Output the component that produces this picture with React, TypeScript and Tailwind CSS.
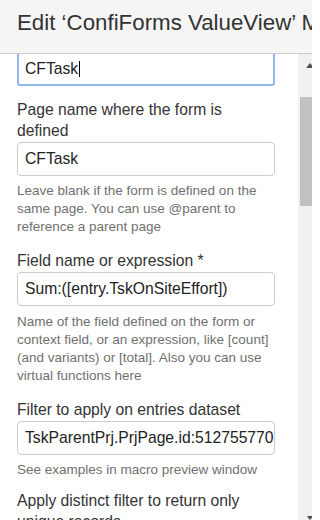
import React from "react";

function Field({ value, focused, caret }: { value: string; focused?: boolean; caret?: boolean }) {
  return (
    <div
      className={
        focused
          ? "h-[34px] w-[258px] rounded-[3px] border-2 border-[#93b7ef] pl-[6px] pr-[1px] flex items-center overflow-hidden whitespace-nowrap text-[15.7px] text-[#222]"
          : "h-[34px] w-[258px] rounded-[4px] border border-[#cccccc] pl-[7px] pr-[1px] flex items-center overflow-hidden whitespace-nowrap text-[15.7px] text-[#222]"
      }
    >
      <span className="leading-[18px]">{value}</span>
      {caret && <span className="inline-block w-[1px] h-[16px] bg-black ml-[1px]" />}
    </div>
  );
}

export default function App() {
  return (
    <div className="w-[312px] h-[520px] overflow-hidden bg-white flex flex-col font-['Liberation_Sans',Arial,sans-serif]">
      <div className="h-[54px] shrink-0 bg-[#f5f5f5] border-b border-[#cccccc] pl-[17px] pt-[11px] whitespace-nowrap overflow-hidden text-[22.3px] leading-[24px] text-[#333]">
        Edit ‘ConfiForms ValueView’ Macro
      </div>
      <div className="flex-1 flex overflow-hidden">
        <div className="w-[298px] shrink-0 overflow-hidden">
          <div className="ml-[17px] w-[258px] -mt-[2px] flex flex-col">
            <Field value="CFTask" focused caret />

            <div className="mt-[13px] text-[15.7px] leading-[21px] text-[#333]">
              Page name where the form is defined
            </div>
            <div className="mt-[1px]">
              <Field value="CFTask" />
            </div>
            <div className="mt-[6px] text-[13.5px] leading-[18px] text-[#707070]">
              Leave blank if the form is defined on the same page. You can use @parent to reference a parent page
            </div>

            <div className="mt-[14px] text-[15.7px] leading-[21px] text-[#333]">Field name or expression *</div>
            <div className="mt-[1px]">
              <Field value="Sum:([entry.TskOnSiteEffort])" />
            </div>
            <div className="mt-[7px] text-[13.5px] leading-[18px] text-[#707070]">
              Name of the field defined on the form or context field, or an expression, like [count] (and variants) or [total]. Also you can use virtual functions here
            </div>

            <div className="mt-[14px] text-[15.7px] leading-[21px] text-[#333]">Filter to apply on entries dataset</div>
            <div className="mt-[1px]">
              <Field value="TskParentPrj.PrjPage.id:512755770" />
            </div>
            <div className="mt-[6px] text-[13.5px] leading-[18px] text-[#707070]">
              See examples in macro preview window
            </div>

            <div className="mt-[11px] text-[15.7px] leading-[21px] text-[#333]">
              Apply distinct filter to return only unique records
            </div>
          </div>
        </div>
        <div className="flex-1 bg-[#f1f1f1] flex flex-col pl-[2px]">
          <div className="h-[43px] shrink-0 pt-[9px] pl-[6px]">
            <svg width="8" height="5" viewBox="0 0 8 5" className="block">
              <polygon points="0,5 8,5 4,0" fill="#505050" />
            </svg>
          </div>
          <div className="h-[109px] shrink-0 bg-[#c1c1c1]" />
          <div className="flex-1 flex flex-col justify-end pl-[6px]">
            <svg width="8" height="4" viewBox="0 0 8 5" className="block">
              <polygon points="0,0 8,0 4,5" fill="#505050" />
            </svg>
          </div>
        </div>
      </div>
    </div>
  );
}
